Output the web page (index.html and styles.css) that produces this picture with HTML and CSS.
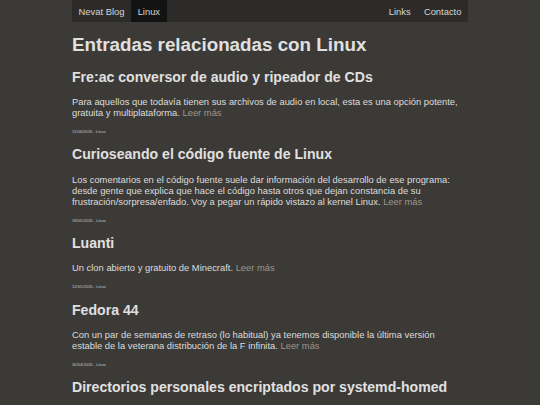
FILE: index.html
```html
<!DOCTYPE html>
<html lang="es">
<head>
<meta charset="utf-8">
<title>Entradas relacionadas con Linux - Nevat Blog</title>
<link rel="stylesheet" href="styles.css">
</head>
<body>
<div class="wrap">
  <nav class="nav">
    <ul class="nav-left">
      <li><a href="#">Nevat Blog</a></li>
      <li class="active"><a href="#">Linux</a></li>
    </ul>
    <ul class="nav-right">
      <li><a href="#">Links</a></li>
      <li><a href="#">Contacto</a></li>
    </ul>
  </nav>
  <main class="main">
    <h1 class="title">Entradas relacionadas con Linux</h1>

    <article class="post">
      <h2>Fre:ac conversor de audio y ripeador de CDs</h2>
      <p>Para aquellos que todavía tienen sus archivos de audio en local, esta es una opción potente, gratuita y multiplataforma. <a class="more" href="#">Leer más</a></p>
      <div class="date">11/06/2026 - Linux</div>
    </article>

    <article class="post">
      <h2>Curioseando el código fuente de Linux</h2>
      <p>Los comentarios en el código fuente suele dar información del desarrollo de ese programa: desde gente que explica que hace el código hasta otros que dejan constancia de su frustración/sorpresa/enfado. Voy a pegar un rápido vistazo al kernel Linux. <a class="more" href="#">Leer más</a></p>
      <div class="date">18/05/2026 - Linux</div>
    </article>

    <article class="post">
      <h2>Luanti</h2>
      <p>Un clon abierto y gratuito de Minecraft. <a class="more" href="#">Leer más</a></p>
      <div class="date">12/05/2026 - Linux</div>
    </article>

    <article class="post">
      <h2>Fedora 44</h2>
      <p>Con un par de semanas de retraso (lo habitual) ya tenemos disponible la última versión estable de la veterana distribución de la F infinita. <a class="more" href="#">Leer más</a></p>
      <div class="date">30/04/2026 - Linux</div>
    </article>

    <article class="post">
      <h2>Directorios personales encriptados por systemd-homed</h2>
    </article>
  </main>
</div>
</body>
</html>
```

FILE: styles.css
```css
html, body {
  margin: 0;
  padding: 0;
  background: #3c3a37;
}

body {
  font-family: "Liberation Sans", Arial, sans-serif;
  font-size: 9.4px;
  color: #dcdcdc;
}

.wrap {
  width: 396px;
  margin: 0 auto;
}

.nav {
  display: flex;
  justify-content: space-between;
  height: 22.3px;
  background: #2c2b29;
}

.nav ul {
  display: flex;
  margin: 0;
  padding: 0;
  list-style: none;
}

.nav li {
  display: flex;
}

.nav a {
  display: flex;
  align-items: center;
  padding: 0 6.6px;
  color: #d6d6d6;
  text-decoration: none;
}

.nav li.active a {
  background: #131313;
}

.title {
  margin: 12.2px 0 12.3px;
  font-size: 18.8px;
  line-height: 22px;
  font-weight: bold;
  color: #e0e0e0;
}

.post h2 {
  margin: 0 0 11.5px;
  font-size: 14.1px;
  line-height: 16px;
  font-weight: bold;
  color: #e0e0e0;
}

.post p {
  margin: 0 0 10.7px;
  padding-right: 4px;
  line-height: 11px;
  color: #dcdcdc;
}

.more {
  color: #9c958d;
  text-decoration: none;
}

.date {
  margin: 0 0 12.4px;
  font-size: 4.1px;
  line-height: 5px;
  color: #c4c4c4;
}
```
